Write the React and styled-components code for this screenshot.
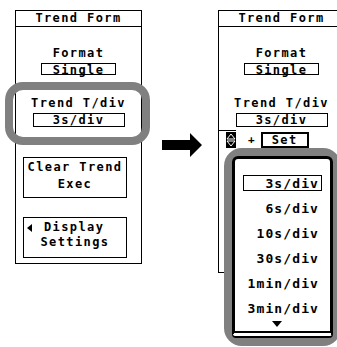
import React from "react";
import styled, { createGlobalStyle } from "styled-components";

const GlobalStyle = createGlobalStyle`
  html, body {
    margin: 0;
    padding: 0;
    background: #fff;
    overflow: hidden;
  }
  body {
    font-family: "DejaVu Sans Mono", "Liberation Mono", monospace;
    font-weight: bold;
    color: #000;
  }
`;

const Stage = styled.div`
  position: relative;
  width: 337px;
  height: 347px;
  overflow: hidden;
  box-sizing: border-box;
  padding-top: 10px;
  display: flex;
  align-items: flex-start;
`;

const Panel = styled.div`
  flex: none;
  box-sizing: border-box;
  width: 127px;
  height: ${(p) => p.$h}px;
  margin-left: ${(p) => p.$ml || 0}px;
  border: 1px solid #000;
  display: flex;
  flex-direction: column;
  align-items: center;
  font-size: 12px;
  letter-spacing: 1.4px;
`;

const Header = styled.div`
  align-self: stretch;
  height: 15px;
  line-height: 15px;
  text-align: center;
  border-bottom: 1px solid #000;
  white-space: nowrap;
`;

const Label = styled.div`
  margin-top: ${(p) => p.$mt}px;
  line-height: 14px;
  height: 14px;
  white-space: nowrap;
`;

const ValueBox = styled.div`
  box-sizing: border-box;
  margin-top: 3px;
  width: ${(p) => p.$w}px;
  height: ${(p) => p.$h}px;
  border: 1px solid #000;
  line-height: 12px;
  text-align: center;
  white-space: nowrap;
`;

const SoftKey = styled.div`
  box-sizing: border-box;
  align-self: flex-start;
  margin-left: 7px;
  margin-top: ${(p) => p.$mt}px;
  width: 104px;
  height: 41px;
  border: 1px solid #000;
  padding-top: ${(p) => p.$pt}px;
  display: flex;
  flex-direction: column;
  align-items: center;
  line-height: ${(p) => p.$lh}px;
  white-space: nowrap;
`;

const KeyLine = styled.div`
  align-self: ${(p) => (p.$left ? "flex-start" : "center")};
  padding-left: ${(p) => (p.$left ? 1 : 0)}px;
  display: flex;
  align-items: center;
`;

const LeftTri = styled.span`
  display: inline-block;
  width: 0;
  height: 0;
  border-top: 4px solid transparent;
  border-bottom: 4px solid transparent;
  border-right: 5px solid #000;
  margin: 0 12px 0 2px;
`;

const ArrowCol = styled.div`
  flex: none;
  width: 76px;
  padding-top: 123px;
  padding-left: 20px;
  box-sizing: border-box;
  line-height: 0;
`;

const SpinRow = styled.div`
  align-self: flex-start;
  margin-top: 3px;
  display: flex;
  align-items: flex-start;
  height: 18px;
`;

const SpinCell = styled.div`
  box-sizing: border-box;
  width: 17px;
  height: 17px;
  border-top: 1px solid #000;
  display: flex;
  justify-content: flex-end;
  padding-top: 1px;
  line-height: 0;
`;

const Plus = styled.div`
  margin: 4px 0 0 12px;
  font-size: 11px;
  line-height: 11px;
  letter-spacing: 0;
`;

const SetBox = styled.div`
  box-sizing: border-box;
  margin: 2px 0 0 6px;
  width: 48px;
  height: 16px;
  border: 2px solid #000;
  line-height: 12px;
  text-align: center;
`;

const Highlight = styled.div`
  position: absolute;
  box-sizing: border-box;
  left: ${(p) => p.$x}px;
  top: ${(p) => p.$y}px;
  width: ${(p) => p.$w}px;
  height: ${(p) => p.$h}px;
  border: 8px solid #808080;
  border-radius: 18px;
  background: ${(p) => (p.$fill ? "#fff" : "transparent")};
  display: flex;
`;

const ListBox = styled.div`
  flex: 1;
  box-sizing: border-box;
  border: 3px solid #000;
  border-bottom: 7px double #000;
  border-radius: 6px 6px 4px 4px;
  background: #fff;
  display: flex;
  flex-direction: column;
  align-items: flex-end;
  padding: 16px 8px 0 0;
  gap: 9px;
  font-size: 13px;
  letter-spacing: 1.1px;
`;

const ListItem = styled.div`
  box-sizing: border-box;
  width: 79px;
  height: 16px;
  line-height: 15px;
  padding-right: 2px;
  text-align: right;
  white-space: nowrap;
  border: 1px solid ${(p) => (p.$sel ? "#000" : "transparent")};
`;

const MoreTri = styled.div`
  margin: -4px 40px 0 0;
  width: 0;
  height: 0;
  border-left: 5px solid transparent;
  border-right: 5px solid transparent;
  border-top: 6px solid #000;
`;

const SpinIcon = () => (
  <svg width="10" height="16" viewBox="0 0 10 16">
    <rect x="0" y="0" width="10" height="16" fill="#000" />
    <path d="M1 7 L5 2 L9 7 Z M1 9 L5 14 L9 9 Z" fill="none" stroke="#fff" strokeWidth="1" />
  </svg>
);

const BigArrow = () => (
  <svg width="40" height="24" viewBox="0 0 40 24">
    <path d="M0 7 H28 V0 L40 12 L28 24 V17 H0 Z" fill="#000" />
  </svg>
);

const items = ["3s/div", "6s/div", "10s/div", "30s/div", "1min/div", "3min/div"];

export default function App() {
  return (
    <>
      <GlobalStyle />
      <Stage>
        <Panel $h={254} $ml={15}>
          <Header>Trend Form</Header>
          <Label $mt={19}>Format</Label>
          <ValueBox $w={75} $h={12}>Single</ValueBox>
          <Label $mt={21}>Trend T/div</Label>
          <ValueBox $w={92} $h={14}>3s/div</ValueBox>
          <SoftKey $mt={30} $pt={1} $lh={17}>
            <KeyLine>Clear Trend</KeyLine>
            <KeyLine>Exec</KeyLine>
          </SoftKey>
          <SoftKey $mt={19} $pt={2} $lh={15}>
            <KeyLine $left>
              <LeftTri />
              Display
            </KeyLine>
            <KeyLine>Settings</KeyLine>
          </SoftKey>
        </Panel>

        <ArrowCol>
          <BigArrow />
        </ArrowCol>

        <Panel $h={263}>
          <Header>Trend Form</Header>
          <Label $mt={19}>Format</Label>
          <ValueBox $w={75} $h={12}>Single</ValueBox>
          <Label $mt={21}>Trend T/div</Label>
          <ValueBox $w={92} $h={14}>3s/div</ValueBox>
          <SpinRow>
            <SpinCell>
              <SpinIcon />
            </SpinCell>
            <Plus>+</Plus>
            <SetBox>Set</SetBox>
          </SpinRow>
        </Panel>

        <Highlight $x={5} $y={82} $w={145} $h={63} />

        <Highlight $x={224} $y={148} $w={117} $h={198} $fill>
          <ListBox>
            {items.map((t, i) => (
              <ListItem key={t} $sel={i === 0}>
                {t}
              </ListItem>
            ))}
            <MoreTri />
          </ListBox>
        </Highlight>
      </Stage>
    </>
  );
}
